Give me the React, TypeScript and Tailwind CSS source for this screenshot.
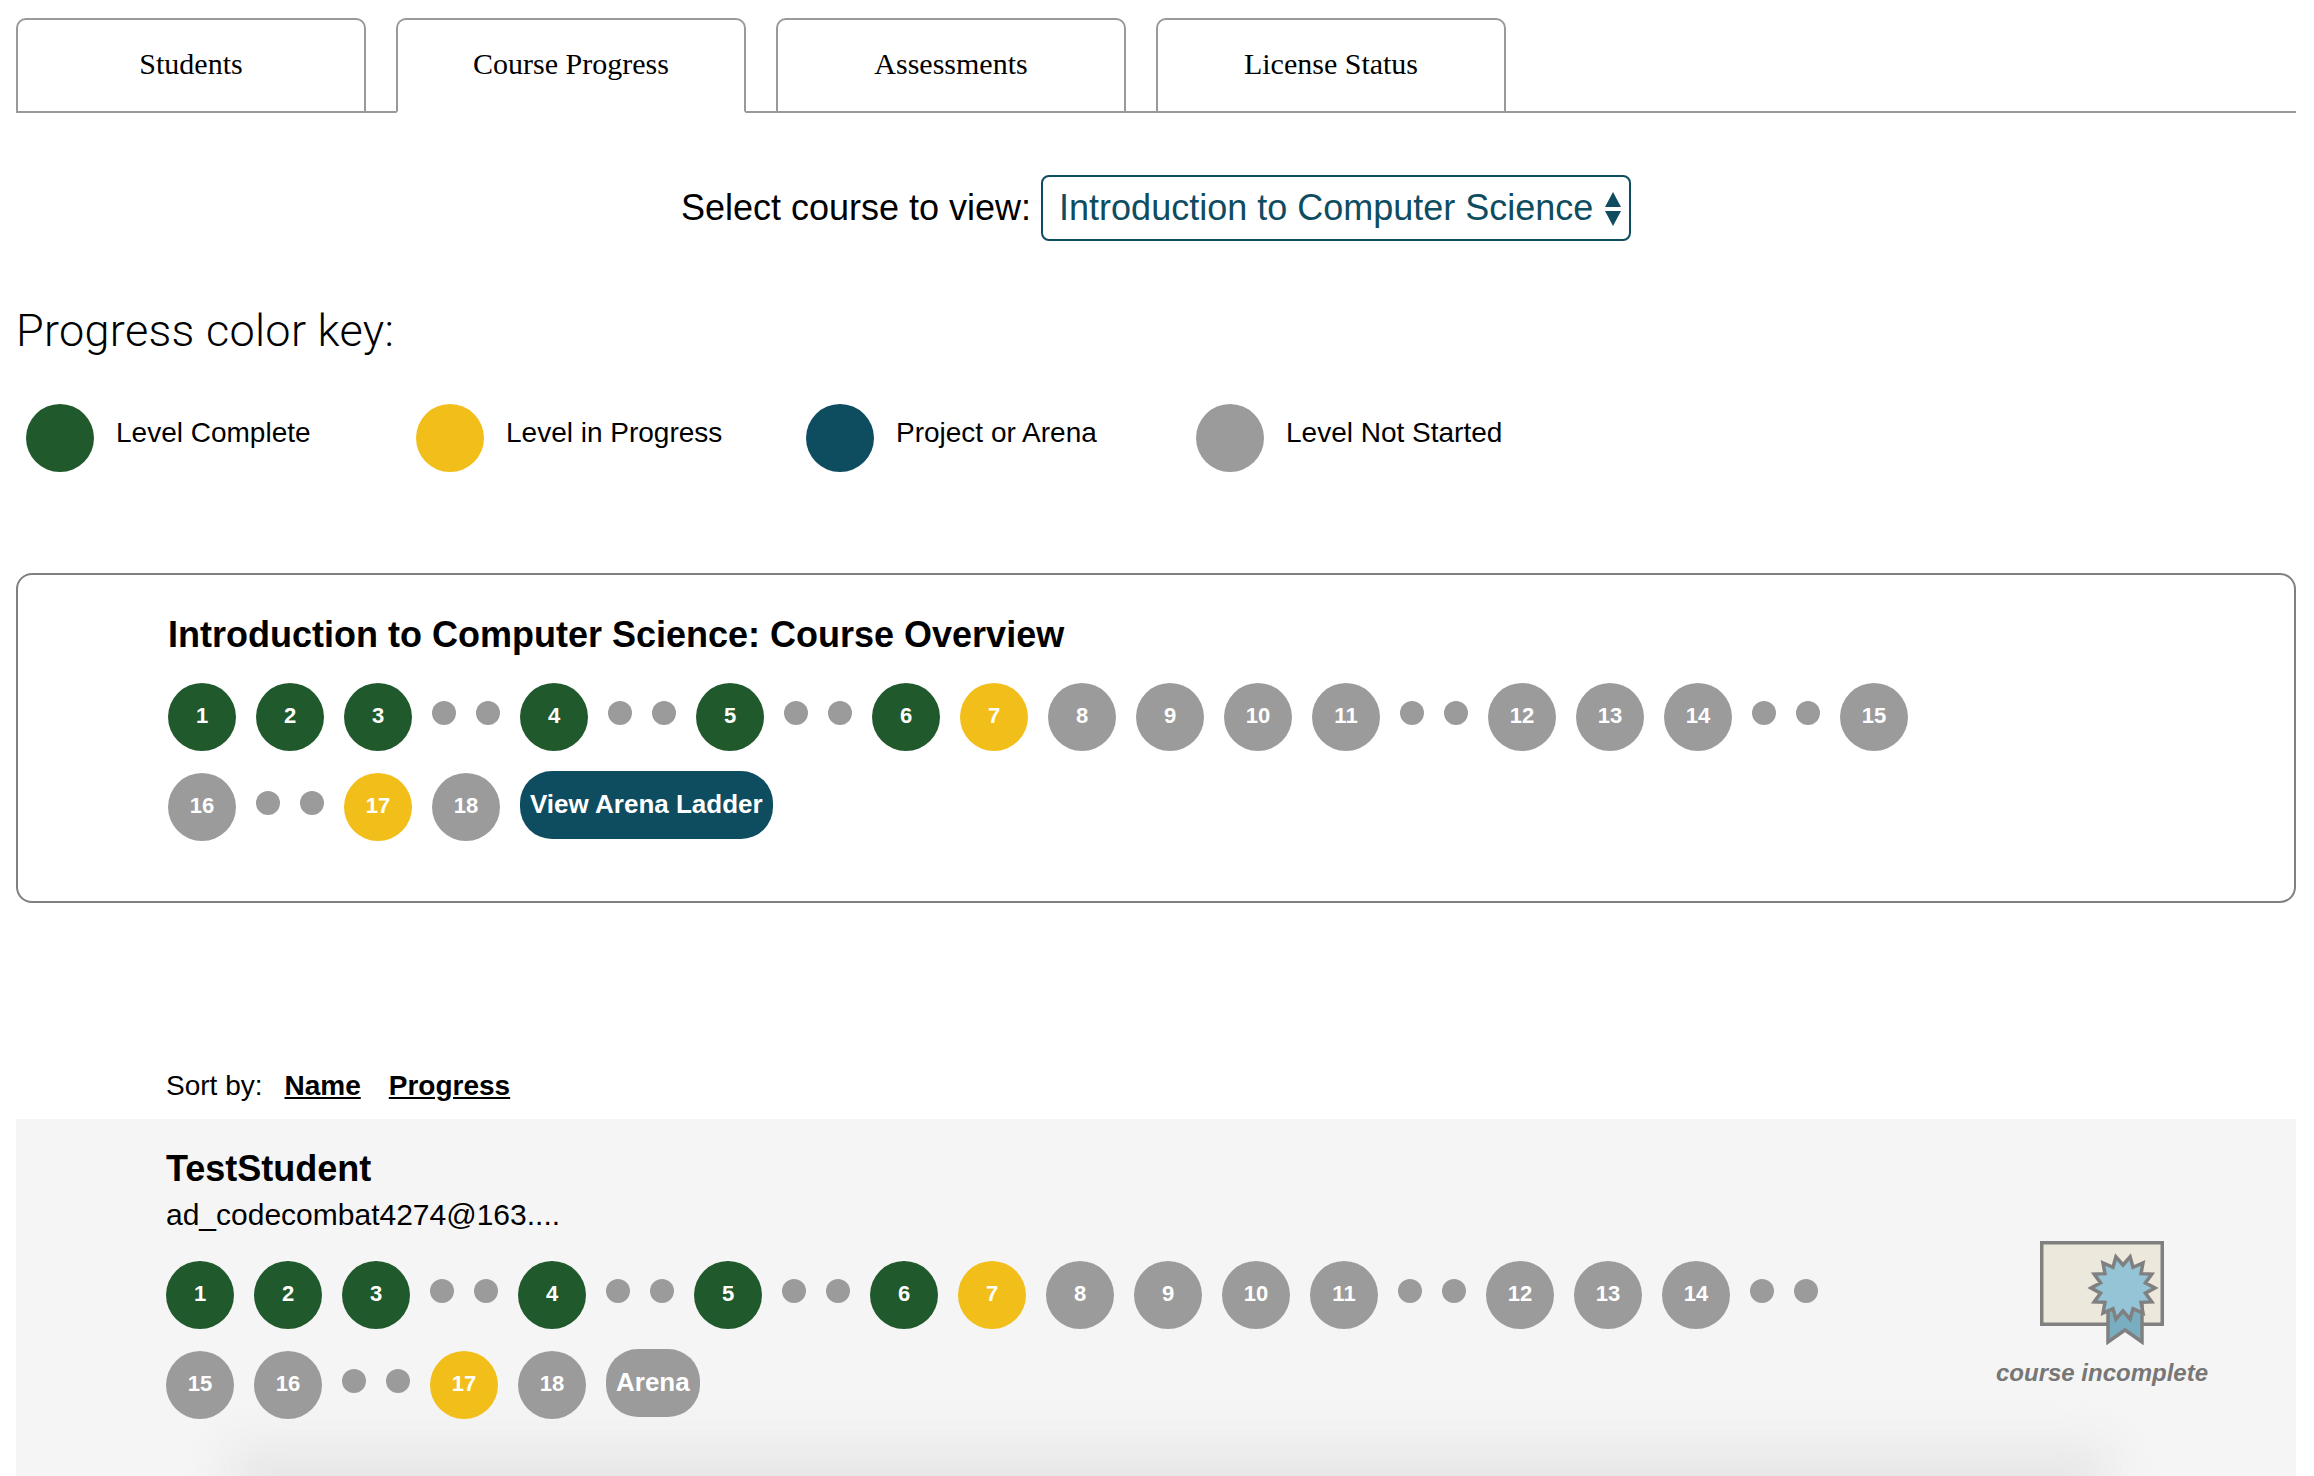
const SANS = "font-['Liberation_Sans',Arial,sans-serif]";

type Kind = "g" | "y" | "n" | "d";
type Item = [Kind, string?];

const bgOf: Record<string, string> = {
  g: "bg-[#20592b]",
  y: "bg-[#f2be19]",
  n: "bg-[#9b9b9b]",
};

function Dot() {
  return <span className="mt-[18px] mr-5 mb-[22px] size-6 shrink-0 rounded-full bg-[#9b9b9b]" />;
}

function Level({ kind, label }: { kind: "g" | "y" | "n"; label: string }) {
  return (
    <span
      className={`mr-5 mb-[22px] flex size-[68px] shrink-0 items-center justify-center rounded-full pb-0.5 text-[22px] leading-none font-bold text-white ${bgOf[kind]}`}
    >
      {label}
    </span>
  );
}

function Pill({ label, className }: { label: string; className: string }) {
  return (
    <span
      className={`-mt-0.5 mr-5 mb-6 flex h-[68px] shrink-0 items-center justify-center rounded-[32px] px-2.5 pb-0.5 text-[26px] leading-none font-bold text-white ${className}`}
    >
      {label}
    </span>
  );
}

function Track({ items, children, width }: { items: Item[]; children: React.ReactNode; width: string }) {
  return (
    <div className={`flex flex-wrap items-start ${width}`}>
      {items.map(([k, l], i) =>
        k === "d" ? <Dot key={i} /> : <Level key={i} kind={k} label={l ?? ""} />,
      )}
      {children}
    </div>
  );
}

const levels: Item[] = [
  ["g", "1"], ["g", "2"], ["g", "3"], ["d"], ["d"],
  ["g", "4"], ["d"], ["d"],
  ["g", "5"], ["d"], ["d"],
  ["g", "6"], ["y", "7"], ["n", "8"], ["n", "9"], ["n", "10"], ["n", "11"], ["d"], ["d"],
  ["n", "12"], ["n", "13"], ["n", "14"], ["d"], ["d"],
  ["n", "15"], ["n", "16"], ["d"], ["d"],
  ["y", "17"], ["n", "18"],
];

function Tab({ label, active }: { label: string; active?: boolean }) {
  return (
    <div
      className={`-mb-0.5 flex h-[95px] w-[350px] shrink-0 justify-center rounded-t-[10px] border-2 border-[#999999] bg-white pt-[29px] font-['Liberation_Serif',serif] text-[30px] leading-none text-black ${
        active ? "border-b-white" : ""
      }`}
    >
      {label}
    </div>
  );
}

function Legend({ color, label }: { color: string; label: string }) {
  return (
    <div className="flex w-[390px] shrink-0 items-start">
      <span className={`size-[68px] shrink-0 rounded-full ${color}`} />
      <span className="ml-[22px] pt-[12px] text-[28px] leading-[34px]">{label}</span>
    </div>
  );
}

function Certificate() {
  const pts: string[] = [];
  const n = 14;
  for (let i = 0; i < n * 2; i++) {
    const r = i % 2 === 0 ? 32 : 23;
    const a = (Math.PI * i) / n;
    pts.push(`${(83 + r * Math.cos(a)).toFixed(1)},${(47 + r * Math.sin(a)).toFixed(1)}`);
  }
  return (
    <svg width="124" height="104" viewBox="0 0 124 104" className="block">
      <rect x="1.75" y="1.75" width="120.5" height="81.5" fill="#ece8dc" stroke="#808080" strokeWidth="3.5" />
      <path d="M68 62 V101 L85 89 L102 101 V62 Z" fill="#79adc0" stroke="#808080" strokeWidth="3.5" />
      <polygon points={pts.join(" ")} fill="#94c4d6" stroke="#808080" strokeWidth="3.5" />
    </svg>
  );
}

export default function App() {
  return (
    <div className={`h-[1476px] w-[2314px] overflow-hidden bg-white pt-[18px] pr-[18px] pl-4 text-black ${SANS}`}>
      <div className="flex gap-[30px] border-b-2 border-[#999999]">
        <Tab label="Students" />
        <Tab label="Course Progress" active />
        <Tab label="Assessments" />
        <Tab label="License Status" />
      </div>

      <div className="mt-[62px] flex items-center justify-center">
        <span className="text-[36px] leading-none">Select course to view:</span>
        <div className="ml-[10px] flex h-[66px] w-[590px] items-center justify-between rounded-lg border-2 border-[#0e4c60] pr-[8px] pl-[16px] text-[36px] leading-none text-[#0e4c60]">
          <span>Introduction to Computer Science</span>
          <svg width="16" height="36" viewBox="0 0 16 36" className="mt-0.5">
            <path d="M8 1 L16 16 H0 Z M0 20 H16 L8 35 Z" fill="#0e4c60" />
          </svg>
        </div>
      </div>

      <div className="mt-[67px] font-['Roboto',sans-serif] text-[45px] leading-none font-light tracking-[0.3px]">Progress color key:</div>

      <div className="mt-[51px] flex pl-[10px]">
        <Legend color="bg-[#20592b]" label="Level Complete" />
        <Legend color="bg-[#f2be19]" label="Level in Progress" />
        <Legend color="bg-[#0e4c60]" label="Project or Arena" />
        <Legend color="bg-[#9b9b9b]" label="Level Not Started" />
      </div>

      <div className="mt-[101px] h-[330px] rounded-2xl border-2 border-[#808080] pt-[40px] pl-[150px]">
        <div className="text-[36px] leading-[40px] font-bold">Introduction to Computer Science: Course Overview</div>
        <div className="mt-[28px]">
          <Track items={levels} width="w-[1800px]">
            <Pill label="View Arena Ladder" className="bg-[#0e4c60]" />
          </Track>
        </div>
      </div>

      <div className="mt-[166px] flex items-center pl-[150px] text-[28px] leading-[34px]">
        <span>Sort by:</span>
        <span className="ml-[22px] font-bold underline">Name</span>
        <span className="ml-[28px] font-bold underline">Progress</span>
      </div>

      <div className="relative mt-[16px] flex h-[400px] overflow-hidden bg-[#f5f5f5] pt-[30px] pl-[150px]">
        <div className="absolute top-[326px] left-[215px] h-[200px] w-[1877px] bg-[#e7e7e7] blur-[22px]" />
        <div className="relative w-[1740px]">
          <div className="text-[36px] leading-[40px] font-bold">TestStudent</div>
          <div className="mt-[6px] text-[30px] leading-[40px]">ad_codecombat4274@163....</div>
          <div className="mt-[26px]">
            <Track items={levels} width="w-[1740px]">
              <Pill label="Arena" className="bg-[#9b9b9b]" />
            </Track>
          </div>
        </div>
        <div className="relative ml-[76px] flex w-[240px] flex-col items-center pt-[92px]">
          <Certificate />
          <div className="mt-[13px] text-[24px] leading-[30px] font-bold text-[#777777] italic">course incomplete</div>
        </div>
      </div>
    </div>
  );
}
